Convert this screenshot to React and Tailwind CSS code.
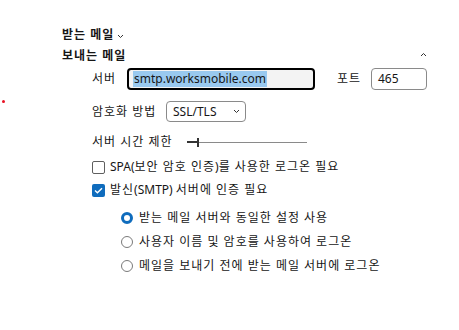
import React from 'react';

const font = { fontFamily: '"Noto Sans", "Noto Sans CJK KR", sans-serif' };

const Chevron = ({ up = false, className = '' }) => (
  <svg width="7" height="5" viewBox="0 0 7 5" className={className}>
    <path d={up ? 'M1 4 L3.5 1.5 L6 4' : 'M1 1 L3.5 3.5 L6 1'} fill="none" stroke="#333" strokeWidth="1" />
  </svg>
);

// Korean text runs wider in the original UI font
const K = ({ children }) => <span className="tracking-[1px]">{children}</span>;

const Checkbox = ({ checked }) =>
  checked ? (
    <span className="flex h-[13px] w-[13px] items-center justify-center rounded-[2px] bg-[#0f6cbd]">
      <svg width="9" height="7" viewBox="0 0 9 7">
        <path d="M1 3.6 L3.4 5.8 L8 1.2" fill="none" stroke="#fff" strokeWidth="1.4" />
      </svg>
    </span>
  ) : (
    <span className="h-[13px] w-[13px] rounded-[2px] border border-[#5f5f5f] bg-white" />
  );

const Radio = ({ checked }) =>
  checked ? (
    <span className="h-[12px] w-[12px] rounded-full border-[3.5px] border-[#0f6cbd] bg-white" />
  ) : (
    <span className="h-[12px] w-[12px] rounded-full border border-[#7a7a7a] bg-white" />
  );

export default function App() {
  return (
    <div className="relative min-h-[330px] w-[459px] bg-white text-[12px] leading-4 text-[#161616]" style={font}>
      <span className="absolute left-[2px] top-[100px] h-[3px] w-[3px] rounded-full bg-[#e81123]" />
      <div className="pl-[62px] pr-[32px] pt-[27px]">
        <div className="flex h-4 items-center gap-[3px] font-bold">
          <K>받는 메일</K>
          <Chevron className="mt-[2px]" />
        </div>
        <div className="mt-[5px] flex h-4 items-center justify-between font-bold">
          <K>보내는 메일</K>
          <Chevron up className="mb-[3px]" />
        </div>

        <div className="pl-[30px]">
          <div className="mt-[4px] flex h-[22px] items-center">
            <span className="w-[35px]"><K>서버</K></span>
            <div className="flex h-[22px] w-[188px] items-center rounded-[4px] border-2 border-black bg-[#f3f3f3] pl-[4px]">
              <span className="bg-[#99c9ef] px-[1px]">smtp.worksmobile.com</span>
            </div>
            <span className="ml-[22px] w-[34px]"><K>포트</K></span>
            <div className="flex h-[22px] w-[56px] items-center rounded-[4px] border border-[#8a8a8a] bg-white pl-[6px]">
              465
            </div>
          </div>

          <div className="mt-[11px] flex h-[21px] items-center">
            <span className="w-[74px]"><K>암호화 방법</K></span>
            <div className="flex h-[21px] w-[80px] items-center justify-between rounded-[4px] border border-[#8a8a8a] bg-white pl-[6px] pr-[5px]">
              <span>SSL/TLS</span>
              <Chevron />
            </div>
          </div>

          <div className="mt-[12px] flex h-4 items-center">
            <span className="w-[95px]"><K>서버 시간 제한</K></span>
            <div className="flex h-[10px] w-[120px] items-center">
              <span className="h-[2px] w-[10px] bg-[#333]" />
              <span className="h-[9px] w-[2px] bg-[#333]" />
              <span className="h-px flex-1 bg-[#8a8a8a]" />
            </div>
          </div>

          <div className="mt-[9px] flex h-4 items-center gap-[5px]">
            <Checkbox />
            <span>SPA(<K>보안 암호 인증</K>)<K>를 사용한 로그온 필요</K></span>
          </div>
          <div className="mt-[7px] flex h-4 items-center gap-[5px]">
            <Checkbox checked />
            <span><K>발신</K>(SMTP) <K>서버에 인증 필요</K></span>
          </div>

          <div className="pl-[29px]">
            <div className="mt-[12px] flex h-4 items-center gap-[6px]">
              <Radio checked />
              <K>받는 메일 서버와 동일한 설정 사용</K>
            </div>
            <div className="mt-[8px] flex h-4 items-center gap-[6px]">
              <Radio />
              <K>사용자 이름 및 암호를 사용하여 로그온</K>
            </div>
            <div className="mt-[8px] flex h-4 items-center gap-[6px]">
              <Radio />
              <K>메일을 보내기 전에 받는 메일 서버에 로그온</K>
            </div>
          </div>
        </div>
      </div>
    </div>
  );
}
